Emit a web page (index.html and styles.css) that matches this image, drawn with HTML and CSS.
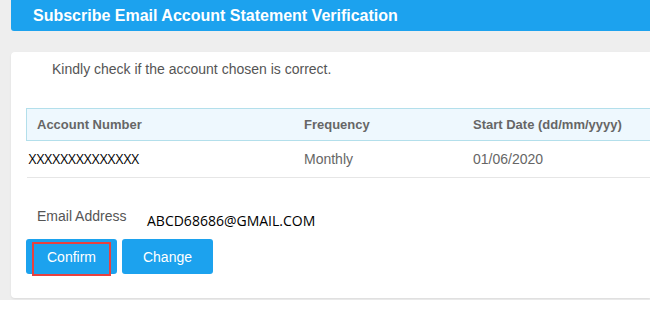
FILE: index.html
```html
<!DOCTYPE html>
<html lang="en">
<head>
<meta charset="utf-8">
<title>Subscribe Email Account Statement Verification</title>
<link rel="stylesheet" href="styles.css">
</head>
<body>
<div class="page">
  <div class="title-bar">Subscribe Email Account Statement Verification</div>
  <div class="card">
    <p class="intro">Kindly check if the account chosen is correct.</p>
    <table class="acct">
      <thead>
        <tr>
          <th class="col-acct">Account Number</th>
          <th class="col-freq">Frequency</th>
          <th class="col-date">Start Date (dd/mm/yyyy)</th>
        </tr>
      </thead>
      <tbody>
        <tr>
          <td class="acct-no">XXXXXXXXXXXXXX</td>
          <td>Monthly</td>
          <td>01/06/2020</td>
        </tr>
      </tbody>
    </table>
    <div class="email-row">
      <span class="email-label">Email Address</span>
      <span class="email-value">ABCD68686@GMAIL.COM</span>
    </div>
    <div class="actions">
      <button class="btn btn-confirm" type="button">Confirm<span class="highlight"></span></button>
      <button class="btn" type="button">Change</button>
    </div>
  </div>
</div>
</body>
</html>
```

FILE: styles.css
```css
html, body {
  margin: 0;
  padding: 0;
  background: #ffffff;
}

body {
  font-family: "Liberation Sans", Arial, sans-serif;
  overflow: hidden;
}

.page {
  background: #eeeeee;
  height: 300px;
  padding-left: 11px;
  overflow: hidden;
}

.title-bar {
  height: 31px;
  line-height: 31px;
  background: #1ca2ee;
  color: #ffffff;
  font-weight: bold;
  font-size: 16px;
  padding-left: 22px;
  border-bottom-left-radius: 3px;
  white-space: nowrap;
}

.card {
  margin-top: 21px;
  background: #ffffff;
  border-radius: 4px 0 0 4px;
  padding: 7px 0 24px 15px;
  box-shadow: 0 1px 2px rgba(0, 0, 0, 0.08);
}

.intro {
  margin: 0;
  padding-left: 26px;
  font-size: 14px;
  line-height: 20px;
  color: #555555;
}

.acct {
  margin-top: 29px;
  width: 660px;
  border-collapse: collapse;
  table-layout: fixed;
}

.acct th {
  background: #eef8fe;
  border-top: 1px solid #b3dfeb;
  border-bottom: 1px solid #b3dfeb;
  height: 31px;
  padding: 0 11px;
  text-align: left;
  font-size: 13px;
  font-weight: bold;
  line-height: 31px;
  color: #666666;
  white-space: nowrap;
}

.acct th:first-child {
  border-left: 1px solid #b3dfeb;
  padding-left: 10px;
}

.col-acct { width: 245px; }
.col-freq { width: 147px; }

.acct td {
  height: 35px;
  padding: 0 11px;
  line-height: 36px;
  font-size: 14px;
  color: #666666;
  border-bottom: 1px solid #e6e6e6;
  white-space: nowrap;
}

.acct td.acct-no {
  padding-left: 2px;
  font-family: "Open Sans", sans-serif;
  font-size: 13.7px;
  color: #000000;
}

.email-row {
  display: flex;
  align-items: flex-start;
  margin-top: 28px;
  height: 24px;
}

.email-label {
  flex: none;
  width: 110px;
  padding-left: 11px;
  font-size: 14px;
  line-height: 20px;
  color: #555555;
}

.email-value {
  padding-top: 6px;
  font-family: "Open Sans", sans-serif;
  font-size: 14px;
  line-height: 18px;
  color: #000000;
}

.actions {
  display: flex;
  gap: 5px;
  margin-top: 9px;
}

.btn {
  position: relative;
  width: 91px;
  height: 35px;
  border: none;
  border-radius: 3px;
  background: #1ca2ee;
  color: #ffffff;
  font-family: "Liberation Sans", Arial, sans-serif;
  font-size: 14px;
  padding: 0;
  margin: 0;
}

.highlight {
  position: absolute;
  left: 6px;
  top: 3px;
  width: 79px;
  height: 34px;
  box-sizing: border-box;
  border: 2px solid #e8413f;
}
```
